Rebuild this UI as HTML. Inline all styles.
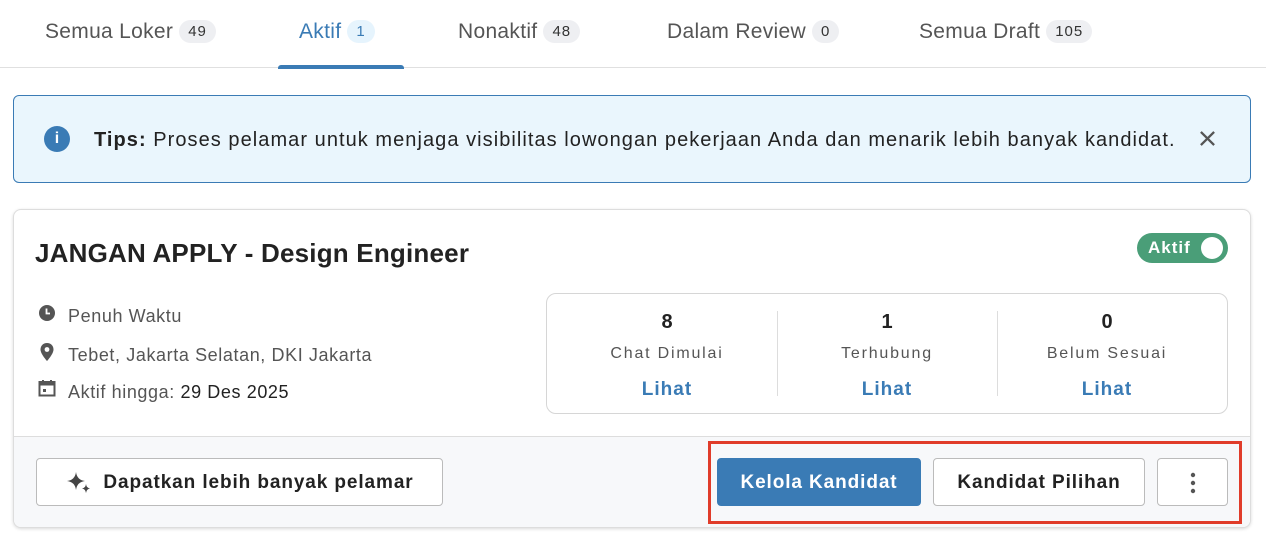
<!DOCTYPE html>
<html><head><meta charset="utf-8"><style>
*{box-sizing:border-box;margin:0;padding:0}
body{width:1266px;height:556px;background:#fff;font-family:"Liberation Sans",sans-serif;position:relative;overflow:hidden;color:#333}
.a{position:absolute;white-space:nowrap}
.tab{font-size:21px;color:#555;top:20px;letter-spacing:.3px}
.badge{display:inline-block;background:#eeeff2;color:#333;border-radius:14px;font-size:15px;padding:3px 9px;margin-left:6px;vertical-align:2px;letter-spacing:1px}
.det{font-size:18px;color:#555;left:68px;letter-spacing:.6px}
.num{font-size:20px;font-weight:bold;color:#222;text-align:center;width:220px}
.lbl{font-size:16px;color:#555;letter-spacing:1.8px;text-align:center;width:220px}
.lh{font-size:19px;font-weight:bold;color:#3a7bb5;text-align:center;width:220px;letter-spacing:1px}
.btn{position:absolute;border:1px solid #bbb;border-radius:4px;background:#fff;font-weight:bold;font-size:19px;color:#222;display:flex;align-items:center;justify-content:center;letter-spacing:.9px;padding-top:2px}
</style></head><body>
<div class="a tab" style="left:45px">Semua Loker<span class="badge">49</span></div>
<div class="a tab" style="left:299px;color:#3a7bb5">Aktif<span class="badge" style="background:#e6f4fd;color:#3a7bb5">1</span></div>
<div class="a tab" style="left:458px">Nonaktif<span class="badge">48</span></div>
<div class="a tab" style="left:667px">Dalam Review<span class="badge">0</span></div>
<div class="a tab" style="left:919px">Semua Draft<span class="badge">105</span></div>
<div class="a" style="left:0;top:67px;width:1266px;height:1px;background:#e0e0e0"></div>
<div class="a" style="left:278px;top:65px;width:126px;height:4px;background:#3a7bb5;border-radius:3px 3px 0 0"></div>

<div class="a" style="left:13px;top:95px;width:1238px;height:88px;background:#eaf6fd;border:1px solid #3a7bb5;border-radius:6px"></div>
<div class="a" style="left:44px;top:126px;width:26px;height:26px;border-radius:50%;background:#3a7bb5;color:#fff;font-weight:bold;font-size:16px;text-align:center;line-height:26px">i</div>
<div class="a" style="left:94px;top:129px;font-size:20px;color:#222;letter-spacing:1.05px"><b>Tips:</b> Proses pelamar untuk menjaga visibilitas lowongan pekerjaan Anda dan menarik lebih banyak kandidat.</div>
<svg class="a" style="left:1199px;top:130px" width="17" height="17" viewBox="0 0 18 18"><path d="M2 2L16 16M16 2L2 16" stroke="#555" stroke-width="2.4"/></svg>

<div class="a" style="left:13px;top:209px;width:1238px;height:319px;border:1px solid #ddd;border-radius:8px;box-shadow:0 1px 3px rgba(0,0,0,.15);background:#fff;overflow:hidden">
<div class="a" style="left:0;top:226px;width:1238px;height:93px;background:#f7f8fa;border-top:1px solid #ddd"></div>
</div>
<div class="a" style="left:35px;top:238px;font-size:26px;font-weight:bold;color:#222;letter-spacing:.2px">JANGAN APPLY - Design Engineer</div>
<div class="a" style="left:1137px;top:233px;width:91px;height:30px;background:#4a9e78;border-radius:15px;color:#fff;font-size:17px;font-weight:bold;padding:5px 0 0 11px;letter-spacing:1px">Aktif<span style="position:absolute;right:5px;top:4px;width:22px;height:22px;border-radius:50%;background:#fff"></span></div>

<svg class="a" style="left:38px;top:304px" width="18" height="18" viewBox="0 0 18 18"><circle cx="9" cy="9" r="8" fill="#555"/><path d="M8.5 4.5V9.5H12" stroke="#fff" stroke-width="1.8" fill="none"/></svg>
<div class="a det" style="top:306px">Penuh Waktu</div>
<svg class="a" style="left:38px;top:342px" width="18" height="20" viewBox="0 0 18 20"><path d="M9 1C5 1 2.5 4 2.5 7.5C2.5 12 9 19 9 19S15.5 12 15.5 7.5C15.5 4 13 1 9 1Z" fill="#555"/><circle cx="9" cy="7.5" r="2.4" fill="#fff"/></svg>
<div class="a det" style="top:345px">Tebet, Jakarta Selatan, DKI Jakarta</div>
<svg class="a" style="left:38px;top:379px" width="18" height="18" viewBox="0 0 18 18"><rect x="1.5" y="3" width="15" height="13.5" fill="none" stroke="#555" stroke-width="2"/><rect x="1.5" y="3" width="15" height="3.5" fill="#555"/><path d="M5 1V4M13 1V4" stroke="#555" stroke-width="2"/><rect x="5" y="10" width="3" height="3" fill="#555"/></svg>
<div class="a det" style="top:382px">Aktif hingga: <span style="color:#222">29 Des 2025</span></div>

<div class="a" style="left:546px;top:293px;width:682px;height:121px;border:1px solid #d6d6d6;border-radius:10px;background:#fff"></div>
<div class="a" style="left:777px;top:311px;width:1px;height:85px;background:#ddd"></div>
<div class="a" style="left:997px;top:311px;width:1px;height:85px;background:#ddd"></div>
<div class="a num" style="left:557px;top:311px">8</div><div class="a lbl" style="left:557px;top:345px">Chat Dimulai</div><div class="a lh" style="left:557px;top:379px">Lihat</div>
<div class="a num" style="left:777px;top:311px">1</div><div class="a lbl" style="left:777px;top:345px">Terhubung</div><div class="a lh" style="left:777px;top:379px">Lihat</div>
<div class="a num" style="left:997px;top:311px">0</div><div class="a lbl" style="left:997px;top:345px">Belum Sesuai</div><div class="a lh" style="left:997px;top:379px">Lihat</div>

<div class="btn" style="left:36px;top:458px;width:407px;height:48px"><svg width="30" height="26" viewBox="0 0 30 26" style="margin-right:8px"><path d="M11 2Q12 10 20 11Q12 12 11 20Q10 12 2 11Q10 10 11 2Z" fill="#444"/><path d="M21 14Q21.5 18 25 18.5Q21.5 19 21 23Q20.5 19 17 18.5Q20.5 18 21 14Z" fill="#444"/></svg>Dapatkan lebih banyak pelamar</div>
<div class="btn" style="left:717px;top:458px;width:204px;height:48px;background:#3a7bb5;border-color:#3a7bb5;color:#fff">Kelola Kandidat</div>
<div class="btn" style="left:933px;top:458px;width:212px;height:48px">Kandidat Pilihan</div>
<div class="btn" style="left:1157px;top:458px;width:71px;height:48px"><svg width="6" height="22"><circle cx="3" cy="3" r="2.2" fill="#555"/><circle cx="3" cy="11" r="2.2" fill="#555"/><circle cx="3" cy="19" r="2.2" fill="#555"/></svg></div>
<div class="a" style="left:708px;top:441px;width:534px;height:83px;border:3px solid #e03c2a"></div>
</body></html>
